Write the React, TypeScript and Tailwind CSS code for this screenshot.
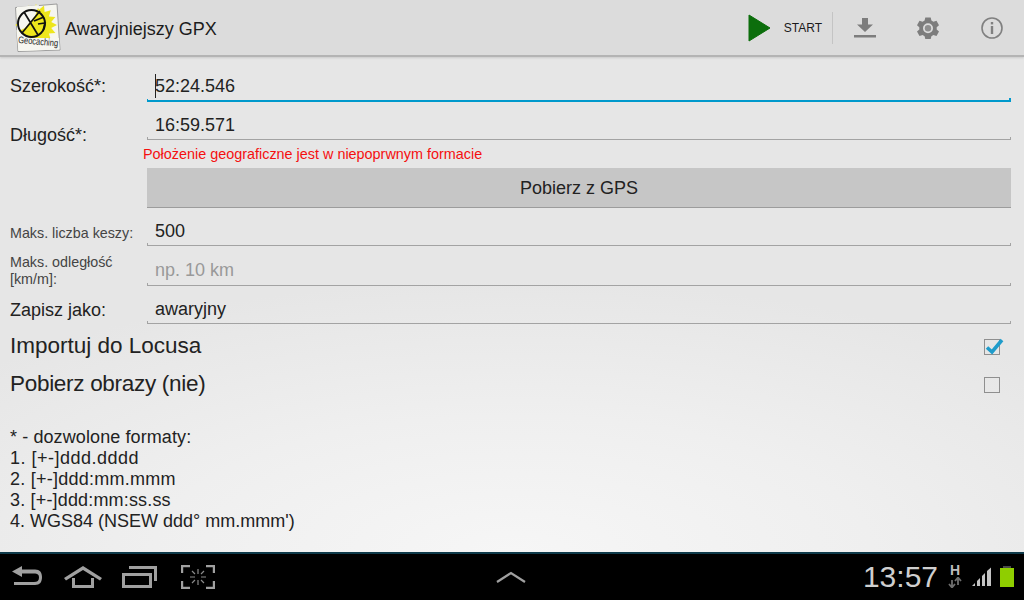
import React from "react";

const sun = Array.from({ length: 32 }, (_, i) => {
  const a = (i * Math.PI) / 16;
  const r = i % 2 === 0 ? 21 : 15.5;
  return `${(21 + r * Math.cos(a)).toFixed(1)},${(23 + r * Math.sin(a)).toFixed(1)}`;
}).join(" ");

function Logo() {
  return (
    <div className="w-[46px] h-[50px] shrink-0 ml-[15px] self-start mt-[1px]">
      <svg width="46" height="50" viewBox="0 0 46 50" className="block">
        <polygon points="0.5,5.5 42,2 45,48 3,49.5" fill="#f6f6f0" stroke="#8a8a8a" strokeWidth="0.8" />
        <polygon points={sun} fill="#eee61c" />
        <polygon points="2,5 24,3 20,14 10,26 2,30" fill="#f6f6f0" />
        <polygon points="1.5,28 6,30 10,34 16,36 44,36 44.6,47.6 3.4,49" fill="#f6f6f0" />
        <circle cx="16.5" cy="21.5" r="13.5" fill="none" stroke="#111" strokeWidth="1.9" />
        <path d="M9 10 L23 33 M25 9 L7 31 M19 19 L29 15 M23 22 L30 21 L28 29" fill="none" stroke="#111" strokeWidth="1.7" />
        <text x="0" y="0" fontSize="7.5" fontFamily="'Liberation Sans', sans-serif" fill="#222" transform="translate(3 41) rotate(5) scale(1 1.3)">Geocaching</text>
      </svg>
    </div>
  );
}

function Field({ label, labelClass, value, placeholder, rowClass, active, boxClass }: { label: React.ReactNode; labelClass: string; value?: string; placeholder?: string; rowClass: string; active?: boolean; boxClass?: string }) {
  return (
    <div className={`flex ${rowClass}`}>
      <div className={`w-[147px] shrink-0 pl-[10px] ${labelClass}`}>{label}</div>
      <div className={`relative w-[864px] ${boxClass ?? ""}`}>
        <div className={`pl-[8px] text-[18px] leading-[20px] ${placeholder ? "text-[#999999]" : "text-[#222222]"}`}>{value ?? placeholder}</div>
        {active ? (
          <div className="absolute left-[8px] -top-[2px] w-[1px] h-[24px] bg-[#222]" />
        ) : null}
        <div className={`absolute left-0 right-0 bottom-0 ${active ? "h-[2px] bg-[#0099cc]" : "h-[1px] bg-[#a3a3a3]"}`} />
        <div className={`absolute left-0 bottom-0 w-[1px] h-[3px] ${active ? "bg-[#0099cc]" : "bg-[#a3a3a3]"}`} />
        <div className={`absolute right-0 bottom-0 w-[1px] h-[3px] ${active ? "w-[2px] h-[4px] bg-[#0099cc]" : "bg-[#a3a3a3]"}`} />
      </div>
    </div>
  );
}

function CheckRow({ label, checked, rowClass, labelClass }: { label: string; checked?: boolean; rowClass: string; labelClass?: string }) {
  return (
    <div className={`flex items-center justify-between pl-[10px] pr-[24px] ${rowClass}`}>
      <span className={`text-[22.5px] leading-[24px] text-[#222222] ${labelClass ?? ""}`}>{label}</span>
      <div className="relative top-[1px] w-[16px] h-[16px] border border-[#8f8f8f]">
        {checked ? (
          <svg width="20" height="18" viewBox="0 0 20 18" className="absolute left-[-1px] top-[-1px] overflow-visible">
            <path d="M3 8.5 L8 13 L18 1" fill="none" stroke="#1f9ccb" strokeWidth="3.6" />
          </svg>
        ) : null}
      </div>
    </div>
  );
}

export default function App() {
  return (
    <div className="w-[1024px] h-[600px] overflow-hidden flex flex-col font-['Liberation_Sans',Arial,sans-serif] bg-[#e6e6e6]">
      {/* Action bar */}
      <div className="h-[57px] shrink-0 pt-[1px] flex items-center bg-[#dcdcdc] border-b-2 border-b-[#b4b4b4] shadow-[0_1px_2px_rgba(0,0,0,0.12)] relative z-10">
        <Logo />
        <span className="ml-[4px] text-[18px] leading-[22px] text-[#1c1c1c] relative top-[1px]">Awaryjniejszy GPX</span>
        <div className="ml-auto flex items-center h-full">
          <svg width="24" height="28" viewBox="0 0 24 28">
            <polygon points="1,1 22,14 1,27" fill="#0c6e0c" stroke="#0c6e0c" strokeLinejoin="round" />
          </svg>
          <span className="ml-[12px] text-[12px] leading-[14px] text-[#1a1a1a]">START</span>
          <div className="ml-[10px] w-[1px] h-[32px] bg-[#c4c4c4]" />
          <div className="w-[63px] flex justify-center">
            <svg width="24" height="24" viewBox="0 0 24 24">
              <path d="M9 2 H15 V8.5 H20 L12 16 L4 8.5 H9 Z" fill="#7d7d7d" />
              <rect x="1" y="19" width="22" height="2.5" fill="#7d7d7d" />
            </svg>
          </div>
          <div className="w-[64px] flex justify-center">
            <svg width="24" height="24" viewBox="0 0 24 24">
              <path fillRule="evenodd" fill="#7d7d7d" d="M9.3 1.5 H14.7 L15.4 4.6 L17.4 5.7 L20.5 4.8 L23 9.3 L20.7 11.2 V13.6 L23 15.5 L20.5 20 L17.4 19.1 L15.4 20.3 L14.7 23 H9.3 L8.6 20.3 L6.6 19.1 L3.5 20 L1 15.5 L3.3 13.6 V11.2 L1 9.3 L3.5 4.8 L6.6 5.7 L8.6 4.6 Z M12 7.3 A5 5 0 1 0 12 17.3 A5 5 0 1 0 12 7.3 Z" />
              <circle cx="12" cy="12.3" r="3.2" fill="#8f8f8f" />
            </svg>
          </div>
          <div className="w-[64px] flex justify-center">
            <svg width="24" height="24" viewBox="0 0 24 24">
              <circle cx="12" cy="12" r="10" fill="none" stroke="#808080" strokeWidth="1.6" />
              <rect x="10.8" y="10" width="2.4" height="8" fill="#808080" />
              <rect x="10.8" y="6" width="2.4" height="2.4" fill="#808080" />
            </svg>
          </div>
        </div>
      </div>

      {/* Content */}
      <div className="flex-1 flex flex-col bg-[radial-gradient(ellipse_70%_55%_at_50%_100%,#f6f6f6_0%,#efefef_50%,#e6e6e6_100%)]">
        <Field rowClass="h-[45px] pt-[19px]" boxClass="h-[26px]" label="Szerokość*:" labelClass="text-[18px] leading-[20px] text-[#222222]" value="52:24.546" active />
        <Field rowClass="h-[38px]" boxClass="h-[38px] pt-[13px]" label={<span className="relative top-[23px]">Długość*:</span>} labelClass="text-[18px] leading-[20px] text-[#222222]" value="16:59.571" />
        <div className="h-[28px] pl-[143px] pt-[6px] text-[14.4px] leading-[16px] text-[#f50f0f]">Położenie geograficzne jest w niepoprwnym formacie</div>
        <div className="ml-[147px] w-[864px] h-[40px] pt-[1px] flex items-center justify-center bg-[#c6c6c6] border-b border-b-[#9c9c9c] text-[18px] text-[#222222]">Pobierz z GPS</div>
        <Field rowClass="h-[38px]" boxClass="h-[38px] pt-[13px]" label={<span className="relative top-[17px]">Maks. liczba keszy:</span>} labelClass="text-[14.3px] leading-[16px] text-[#444444]" value="500" />
        <Field rowClass="h-[40px]" boxClass="h-[40px] pt-[14px]" label={<span className="block pt-[8px]">Maks. odległość<br />[km/m]:</span>} labelClass="text-[14.3px] leading-[17px] text-[#444444]" placeholder="np. 10 km" />
        <Field rowClass="h-[38px]" boxClass="h-[38px] pt-[13px]" label={<span className="relative top-[14px]">Zapisz jako:</span>} labelClass="text-[18px] leading-[20px] text-[#222222]" value="awaryjny" />
        <CheckRow label="Importuj do Locusa" checked rowClass="h-[38px] mt-[3px]" />
        <CheckRow label="Pobierz obrazy (nie)" rowClass="h-[38px]" labelClass="tracking-[-0.3px]" />
        <div className="pl-[10px] pt-[24px] text-[18px] leading-[21px] text-[#222222]">
          <div className="tracking-[0.1px]">* - dozwolone formaty:</div>
          <div className="tracking-[0.5px]">1. [+-]ddd.dddd</div>
          <div className="tracking-[0.25px]">2. [+-]ddd:mm.mmm</div>
          <div className="tracking-[0.17px]">3. [+-]ddd:mm:ss.ss</div>
          <div>4. WGS84 (NSEW ddd° mm.mmm')</div>
        </div>
      </div>

      {/* System bar */}
      <div className="h-[48px] shrink-0 flex items-center relative bg-black border-t-2 border-t-[#0e3a4a]">
        <div className="flex items-center pl-[11px]">
          <svg width="32" height="22" viewBox="0 0 32 22">
            <path d="M1 5.5 L11 0 V3.5 H24 C29 3.5 31 6.5 31 11 C31 16 29 19 24 19 H3 V16 H23 C26.5 16 28 14.5 28 11.5 C28 8.5 26.5 7.5 23 7.5 H11 V11 Z" fill="#a0a0a0" />
          </svg>
          <svg width="40" height="24" viewBox="0 0 40 24" className="ml-[20px]">
            <path d="M1 13 L20 1 L39 13 L37 15.5 L20 5 L3 15.5 Z M9 13 H12 V20 H28 V13 H31 V23 H9 Z" fill="#a0a0a0" />
          </svg>
          <svg width="35" height="24" viewBox="0 0 35 24" className="ml-[19px]">
            <path fillRule="evenodd" d="M0 8 H30 V23 H0 Z M3 11 V20 H27 V11 Z" fill="#a0a0a0" />
            <path d="M7 1 H35 V16 H32 V4 H7 Z" fill="#a0a0a0" />
          </svg>
          <svg width="34" height="24" viewBox="0 0 34 24" className="ml-[24px]">
            <path d="M1 8 V1 H9 M25 1 H33 V8 M1 16 V23 H9 M25 23 H33 V16" fill="none" stroke="#a0a0a0" strokeWidth="2.4" />
            <path d="M17 4 V9 M17 15 V20 M9 12 H14 M20 12 H25 M11 6 L14 9 M23 6 L20 9 M11 18 L14 15 M23 18 L20 15" stroke="#8a8a8a" strokeWidth="1.2" />
          </svg>
        </div>
        <svg width="30" height="14" viewBox="0 0 30 14" className="absolute left-[496px] top-[16px]">
          <path d="M1 12 L15 3 L29 12" fill="none" stroke="#a0a0a0" strokeWidth="2.2" />
        </svg>
        <div className="ml-auto flex items-center pr-[10px]">
          <span className="text-[30px] leading-[34px] text-[#cfcfcf]">13:57</span>
          <div className="ml-[10px] flex flex-col items-center w-[14px] -mt-[2px]">
            <span className="text-[14px] leading-[12px] font-bold text-[#bdbdbd]">H</span>
            <svg width="14" height="11" viewBox="0 0 14 11" className="mt-[1px]">
              <path d="M4 10 V3 M1 7 L4 10.5 L7 7 M10 1 V8 M7 4 L10 0.5 L13 4" fill="none" stroke="#6e6e6e" strokeWidth="1.8" />
            </svg>
          </div>
          <svg width="20" height="20" viewBox="0 0 20 20" className="ml-[10px]">
            <polygon points="0,19 3,16 3,19" fill="#c4c4c4" />
            <polygon points="5,14 8,11 8,19 5,19" fill="#c4c4c4" />
            <polygon points="10,9 13,6 13,19 10,19" fill="#c4c4c4" />
            <polygon points="15,4 19,0.5 19,19 15,19" fill="#c4c4c4" />
          </svg>
          <div className="ml-[8px] flex flex-col items-center -mt-[1px]">
            <div className="w-[8px] h-[2px] bg-[#4a4a4a]" />
            <div className="w-[14px] h-[19px] bg-[#8fce00]" />
          </div>
        </div>
      </div>
    </div>
  );
}
